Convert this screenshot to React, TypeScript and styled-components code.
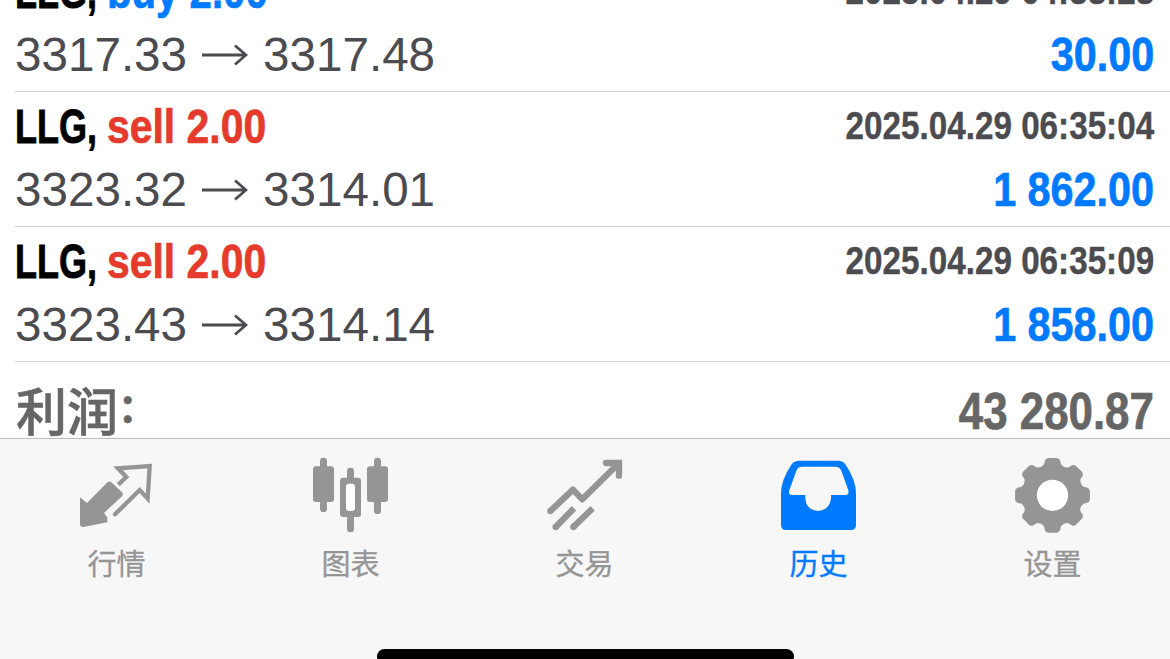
import React from 'react';
import styled, { createGlobalStyle } from 'styled-components';

const GlobalStyle = createGlobalStyle`
  body {
    margin: 0;
    background: #fff;
    overflow: hidden;
  }
`;

const Screen = styled.div`
  width: 1170px;
  height: 659px;
  overflow: hidden;
  display: flex;
  flex-direction: column;
  background: #fff;
  font-family: 'Liberation Sans', 'Noto Sans CJK SC', sans-serif;
`;

const History = styled.main`
  height: 438px;
  flex: none;
  overflow: hidden;
  display: flex;
  flex-direction: column;
  justify-content: flex-end;
`;

const Deal = styled.article`
  box-sizing: border-box;
  flex: none;
  height: 135.1px;
  margin-left: 15px;
  padding: 3px 16px 0 0;
  border-bottom: 1.5px solid #d0d0d2;
`;

const Line = styled.div`
  display: flex;
  justify-content: space-between;
  height: 63px;
  line-height: 63px;
  white-space: nowrap;
`;

const Symbol = styled.span`
  display: inline-block;
  width: 92px;
  font-size: 49px;
  font-weight: 700;
  color: #000;
  transform: scaleX(0.735);
  transform-origin: left;
  -webkit-text-stroke: 0.9px currentColor;
`;

const Side = styled.span<{ $side: 'buy' | 'sell' }>`
  display: inline-block;
  font-size: 48.5px;
  font-weight: 700;
  color: ${(p) => (p.$side === 'buy' ? '#007aff' : '#e53b2c')};
  transform: scaleX(${(p) => (p.$side === 'buy' ? 0.828 : 0.843)});
  transform-origin: left;
  -webkit-text-stroke: 0.7px currentColor;
`;

const Time = styled.time`
  font-size: 39px;
  line-height: 62px;
  font-weight: 700;
  color: #4b4b50;
  transform: scaleX(0.852);
  transform-origin: right;
  -webkit-text-stroke: 0.4px currentColor;
`;

const Prices = styled.div`
  display: flex;
  align-items: center;
  font-size: 47.6px;
  color: #4b4b50;
`;

const Arrow = styled.svg`
  width: 47px;
  height: 22px;
  margin: 0 15px 0 14px;
`;

const Profit = styled.span`
  font-size: 48px;
  font-weight: 700;
  color: #007aff;
  transform: scaleX(0.86);
  transform-origin: right;
  -webkit-text-stroke: 0.7px currentColor;
`;

const Summary = styled.section`
  flex: none;
  display: flex;
  justify-content: space-between;
  height: 75.6px;
  padding: 0 16px 0 15px;
  color: #666;
  white-space: nowrap;
`;

const SummaryLabel = styled.span`
  display: flex;
  padding-left: 1px;
  font: 500 51px/94px 'Noto Sans CJK SC', sans-serif;
  -webkit-text-stroke: 0.6px currentColor;
`;

const Colon = styled.span`
  font-size: 39px;
  font-weight: 700;
  line-height: 86px;
`;

const SummaryValue = styled.span`
  font-size: 51px;
  font-weight: 700;
  line-height: 100px;
  transform: scaleX(0.86);
  transform-origin: right;
  -webkit-text-stroke: 0.7px currentColor;
`;

const TabBar = styled.nav`
  box-sizing: border-box;
  position: relative;
  flex: 1;
  display: grid;
  grid-template-columns: repeat(5, 1fr);
  border-top: 1px solid #b9b9bb;
  background: #f7f7f7;
`;

const Tab = styled.a<{ $active?: boolean }>`
  display: flex;
  flex-direction: column;
  align-items: center;
  padding-top: 18px;
  color: ${(p) => (p.$active ? '#007aff' : '#959595')};
`;

const TabIcon = styled.svg`
  width: 76px;
  height: 76px;
  flex: none;
`;

const TabLabel = styled.span`
  margin-top: 8px;
  padding-right: 1px;
  font: 400 29px/42px 'Noto Sans CJK SC', sans-serif;
  -webkit-text-stroke: 0.3px currentColor;
`;

const HomeIndicator = styled.div`
  position: absolute;
  left: 377px;
  bottom: -5px;
  width: 417px;
  height: 15px;
  border-radius: 8px;
  background: #000;
`;

type DealData = {
  side: 'buy' | 'sell';
  time: string;
  open: string;
  close: string;
  profit: string;
};

const deals: DealData[] = [
  { side: 'buy', time: '2025.04.29 04:38:28', open: '3317.33', close: '3317.48', profit: '30.00' },
  { side: 'sell', time: '2025.04.29 06:35:04', open: '3323.32', close: '3314.01', profit: '1 862.00' },
  { side: 'sell', time: '2025.04.29 06:35:09', open: '3323.43', close: '3314.14', profit: '1 858.00' },
];

const gearPath = () => {
  const points: string[] = [];
  for (let i = 0; i < 8; i++) {
    const a = (i * Math.PI) / 4 - Math.PI / 2;
    const at = (r: number, d: number) =>
      `${(187.5 + r * Math.cos(a + d)).toFixed(1)} ${(166 + r * Math.sin(a + d)).toFixed(1)}`;
    points.push(
      `${i ? 'L' : 'M'}${at(96, -0.27)}`,
      `L${at(108, -0.21)}Q${at(113, -0.17)} ${at(113, -0.11)}`,
      `L${at(113, 0.11)}Q${at(113, 0.17)} ${at(108, 0.21)}`,
      `L${at(96, 0.27)}Q${at(89, 0.3927)} ${at(96, 0.5154)}`,
    );
  }
  return points.join('') + 'Z';
};

const QuotesIcon = () => (
  <TabIcon viewBox="57 51 228 228" fill="currentColor">
    <path d="M60 172L81 189L143 126Q149 122 154 127L186 157Q191 163 186 169L132 219L142 232V247L70 261Q60 262 60 252Z" />
    <path
      d="M175 134L199 111L174 85L269 78L263 176L239 150L166 222"
      fill="none"
      stroke="currentColor"
      strokeWidth="13"
    />
    <circle cx="165" cy="223" r="6.5" />
  </TabIcon>
);

const ChartIcon = () => (
  <TabIcon viewBox="69 51 228 228" fill="currentColor">
    <rect x="90" y="53" width="21" height="163" rx="10" />
    <rect x="69" y="79" width="63" height="107" rx="9" />
    <rect x="252" y="53" width="21" height="169" rx="10" />
    <rect x="231" y="79" width="63" height="107" rx="9" />
    <rect x="171" y="83" width="21" height="194" rx="10" />
    <rect x="150" y="113" width="63" height="118" rx="9" />
    <rect x="168" y="131" width="27" height="82" rx="9" fill="#fff" />
  </TabIcon>
);

const TradeIcon = () => (
  <TabIcon viewBox="66 51 228 228" fill="none" stroke="currentColor" strokeWidth="19">
    <path d="M76 213L144 149L172 178L276 75" strokeLinejoin="round" />
    <path d="M243 69H282V107" strokeLinecap="round" />
    <path d="M92 261L147 205M145 261L203 205" />
    <g fill="currentColor" stroke="none">
      <circle cx="76" cy="213" r="9.5" />
      <circle cx="92" cy="261" r="9.5" />
      <circle cx="145" cy="261" r="9.5" />
    </g>
  </TabIcon>
);

const HistoryIcon = () => (
  <TabIcon viewBox="63 51 228 228">
    <path
      fill="currentColor"
      d="M118 62H234Q249 62 256 73Q288 121 288 160V255Q288 270 273 270H78Q63 270 63 255V160Q63 121 95 73Q102 62 118 62Z"
    />
    <path
      fill="#f7f7f7"
      d="M127 80H225Q239 80 244 92L265 151Q268 165 256 165H213V175Q211 194 199 204Q187 213 174 213Q161 213 149 204Q137 194 136 175V165H97Q84 165 88 151L109 92Q113 80 127 80Z"
    />
  </TabIcon>
);

const SettingsIcon = () => (
  <TabIcon viewBox="75 51 228 228">
    <path d={gearPath()} fill="currentColor" />
    <circle cx="187.5" cy="166" r="47" fill="#fff" />
  </TabIcon>
);

const tabs = [
  { label: '行情', Icon: QuotesIcon },
  { label: '图表', Icon: ChartIcon },
  { label: '交易', Icon: TradeIcon },
  { label: '历史', Icon: HistoryIcon, active: true },
  { label: '设置', Icon: SettingsIcon },
];

export default function App() {
  return (
    <Screen>
      <GlobalStyle />
      <History>
        {deals.map((d) => (
          <Deal key={d.time}>
            <Line>
              <div>
                <Symbol>LLG,</Symbol>
                <Side $side={d.side}>{d.side} 2.00</Side>
              </div>
              <Time>{d.time}</Time>
            </Line>
            <Line>
              <Prices>
                {d.open}
                <Arrow viewBox="0 0 47 22" fill="none" stroke="currentColor" strokeWidth="2.8">
                  <path d="M1 11H45M34 1.5L45 11L34 20.5" />
                </Arrow>
                {d.close}
              </Prices>
              <Profit>{d.profit}</Profit>
            </Line>
          </Deal>
        ))}
        <Summary>
          <SummaryLabel>
            利润<Colon>：</Colon>
          </SummaryLabel>
          <SummaryValue>43 280.87</SummaryValue>
        </Summary>
      </History>
      <TabBar>
        {tabs.map(({ label, Icon, active }) => (
          <Tab key={label} $active={active}>
            <Icon />
            <TabLabel>{label}</TabLabel>
          </Tab>
        ))}
        <HomeIndicator />
      </TabBar>
    </Screen>
  );
}
